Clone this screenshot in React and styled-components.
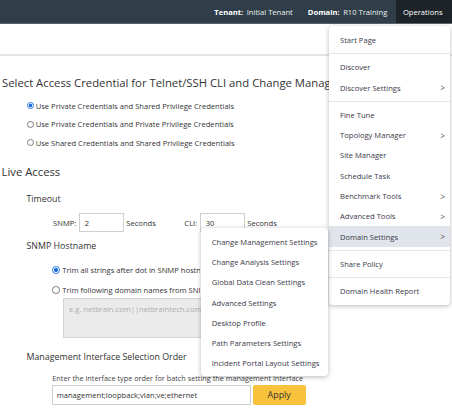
import React from 'react';
import styled, { createGlobalStyle } from 'styled-components';

const Global = createGlobalStyle`
  html, body { margin: 0; padding: 0; background: #fff; }
  body { font-family: "Open Sans", "Liberation Sans", sans-serif; color: #333; }
  * { box-sizing: border-box; }
`;

const Page = styled.div`
  position: relative;
  width: 452px;
  height: 408px;
  overflow: hidden;
  background: #fff;
`;

const TopBar = styled.header`
  height: 24px;
  background: #2f3e48;
  border-bottom: 1px solid #58646d;
  display: flex;
  justify-content: flex-end;
  align-items: stretch;
  font-size: 7.6px;
  color: #fff;
  white-space: nowrap;
`;

const Info = styled.div`
  display: flex;
  align-items: center;
  gap: 3.5px;
  margin-right: ${p => p.$gap}px;
`;

const InfoLabel = styled.span`
  font-weight: 700;
`;

const InfoValue = styled.span`
  color: #eef0f2;
`;

const OpsTab = styled.div`
  background: #1c2329;
  display: flex;
  align-items: center;
  padding: 0 9.5px 0 7.3px;
`;

const Toolbar = styled.div`
  height: 32px;
  border-bottom: 2px solid #e6e6e6;
`;

const Content = styled.main`
  white-space: nowrap;
`;

const Title = styled.h1`
  margin: ${p => p.$top}px 0 0 ${p => p.$left}px;
  font-size: 11.3px;
  line-height: 16px;
  font-weight: 400;
  color: #333;
  max-width: ${p => p.$clip || 440}px;
  overflow: hidden;
`;

const SubTitle = styled.h2`
  margin: ${p => p.$top}px 0 0 26.5px;
  font-size: 8.85px;
  line-height: 14px;
  font-weight: 400;
  color: #333;
`;

const RadioList = styled.div`
  margin: ${p => p.$top}px 0 0 ${p => p.$left}px;
  display: flex;
  flex-direction: column;
  gap: ${p => p.$gap}px;
`;

const RadioRow = styled.label`
  display: flex;
  align-items: center;
  gap: ${p => p.$gap}px;
  height: ${p => p.$h}px;
  font-size: ${p => p.$fs}px;
  color: #333;
  max-width: ${p => p.$clip || 400}px;
  overflow: hidden;
`;

const RadioDot = styled.span`
  width: ${p => p.$size}px;
  height: ${p => p.$size}px;
  border-radius: 50%;
  flex: none;
  border: 1px solid ${p => (p.$checked ? '#2a7ae2' : '#7d7d7d')};
  background: ${p =>
    p.$checked
      ? 'radial-gradient(circle, #1f6fe0 0 42%, #cfe0f8 52%, #fff 62%)'
      : '#fff'};
`;

const FieldRow = styled.div`
  margin: ${p => p.$top}px 0 0 53px;
  display: flex;
  align-items: center;
  height: 19px;
  font-size: 7.6px;
  color: #333;
`;

const Field = styled.div`
  display: flex;
  align-items: center;
  gap: 2.5px;
  margin-right: ${p => p.$after}px;
`;

const SmallInput = styled.div`
  width: 45px;
  height: 19px;
  border: 1px solid #cfcfcf;
  padding: 0 5px;
  display: flex;
  align-items: center;
  font-size: 7.6px;
  color: #333;
  background: #fff;
`;

const TextArea = styled.div`
  margin: 0 0 0 63px;
  width: 138px;
  height: 40px;
  background: #ebebeb;
  border: 1px solid #d4d4d4;
  border-right: none;
  padding: 4px 0 4px 5px;
  font-size: 7.6px;
  line-height: 12px;
  color: #ababab;
  overflow: hidden;
`;

const Hint = styled.p`
  margin: ${p => p.$top}px 0 0 52.3px;
  font-size: 7.3px;
  line-height: 12px;
  color: #444;
`;

const ApplyRow = styled.div`
  margin: 1.2px 0 0 51.7px;
  display: flex;
  gap: 2px;
  height: 19.5px;
`;

const WideInput = styled.div`
  width: 199px;
  height: 100%;
  border: 1px solid #cfcfcf;
  padding: 0 4px;
  display: flex;
  align-items: center;
  font-size: 7.6px;
  color: #333;
`;

const ApplyButton = styled.button`
  width: 53px;
  height: 100%;
  background: #f8c23c;
  border: none;
  border-radius: 2px;
  font-family: inherit;
  font-size: 8.9px;
  color: #333;
  padding: 0;
`;

const MenuPanel = styled.div`
  position: absolute;
  left: ${p => p.$left}px;
  top: ${p => p.$top}px;
  width: ${p => p.$width}px;
  background: #fff;
  border-radius: 4px;
  box-shadow: 0 1px 5px rgba(0, 0, 0, 0.28);
  padding: ${p => p.$padTop}px 0 ${p => p.$padBottom}px;
  z-index: ${p => p.$z};
`;

const MenuItem = styled.div`
  height: 20.3px;
  display: flex;
  align-items: center;
  justify-content: space-between;
  padding: 0 5px 0 ${p => p.$indent}px;
  font-size: 7.6px;
  color: #3a3848;
  background: ${p => (p.$active ? '#dfe5ea' : 'transparent')};
  white-space: nowrap;
`;

const Chevron = styled.span`
  font-size: 8.4px;
  color: #555;
`;

const MenuSep = styled.div`
  height: 1px;
  background: #e4e4e4;
  margin: 3px 0;
`;

const opsMenu = [
  ['Start Page'],
  '-',
  ['Discover'],
  ['Discover Settings', true],
  '-',
  ['Fine Tune'],
  ['Topology Manager', true],
  ['Site Manager'],
  ['Schedule Task'],
  ['Benchmark Tools', true],
  ['Advanced Tools', true],
  ['Domain Settings', true, true],
  '-',
  ['Share Policy'],
  '-',
  ['Domain Health Report'],
];

const subMenu = [
  'Change Management Settings',
  'Change Analysis Settings',
  'Global Data Clean Settings',
  'Advanced Settings',
  'Desktop Profile',
  'Path Parameters Settings',
  'Incident Portal Layout Settings',
];

export default function App() {
  return (
    <Page>
      <Global />
      <TopBar>
        <Info $gap={15}>
          <InfoLabel>Tenant:</InfoLabel>
          <InfoValue>Initial Tenant</InfoValue>
        </Info>
        <Info $gap={8.3}>
          <InfoLabel>Domain:</InfoLabel>
          <InfoValue>R10 Training</InfoValue>
        </Info>
        <OpsTab>Operations</OpsTab>
      </TopBar>
      <Toolbar />
      <Content>
        <Title $top={19} $left={2} $clip={327}>
          Select Access Credential for Telnet/SSH CLI and Change Management
        </Title>
        <RadioList $top={5.6} $left={26.7} $gap={0}>
          <RadioRow $gap={2} $h={18.4} $fs={7.6}>
            <RadioDot $size={7} $checked />
            Use Private Credentials and Shared Privilege Credentials
          </RadioRow>
          <RadioRow $gap={2} $h={18.4} $fs={7.6}>
            <RadioDot $size={7} />
            Use Private Credentials and Private Privilege Credentials
          </RadioRow>
          <RadioRow $gap={2} $h={18.4} $fs={7.6}>
            <RadioDot $size={7} />
            Use Shared Credentials and Shared Privilege Credentials
          </RadioRow>
        </RadioList>
        <Title $top={11.9} $left={1.5}>Live Access</Title>
        <SubTitle $top={12.6}>Timeout</SubTitle>
        <FieldRow $top={7.2}>
          <Field $after={28.5}>
            SNMP:
            <SmallInput>2</SmallInput>
            Seconds
          </Field>
          <Field $after={0}>
            CLI:
            <SmallInput>30</SmallInput>
            Seconds
          </Field>
        </FieldRow>
        <SubTitle $top={6.6}>SNMP Hostname</SubTitle>
        <RadioList $top={9} $left={52.3} $gap={4.2}>
          <RadioRow $gap={2.3} $h={16} $fs={7.6} $clip={148}>
            <RadioDot $size={7.7} $checked />
            Trim all strings after dot in SNMP hostname
          </RadioRow>
          <RadioRow $gap={2.3} $h={16} $fs={7.6} $clip={148}>
            <RadioDot $size={7.7} />
            Trim following domain names from SNMP hostname
          </RadioRow>
        </RadioList>
        <TextArea>e.g. netbrain.com||netbraintech.com</TextArea>
        <SubTitle $top={11.3}>Management Interface Selection Order</SubTitle>
        <Hint $top={8.3}>
          Enter the interface type order for batch setting the management interface
        </Hint>
        <ApplyRow>
          <WideInput>management;loopback;vlan;ve;ethernet</WideInput>
          <ApplyButton>Apply</ApplyButton>
        </ApplyRow>
      </Content>

      <MenuPanel $left={329} $top={25.5} $width={121} $padTop={4.3} $padBottom={4} $z={2}>
        {opsMenu.map((it, i) =>
          it === '-' ? (
            <MenuSep key={i} />
          ) : (
            <MenuItem key={i} $indent={11} $active={!!it[2]}>
              {it[0]}
              {it[1] && <Chevron>&gt;</Chevron>}
            </MenuItem>
          )
        )}
      </MenuPanel>

      <MenuPanel $left={201} $top={228} $width={127} $padTop={3.5} $padBottom={2} $z={3}>
        {subMenu.map(t => (
          <MenuItem key={t} $indent={10.7}>
            {t}
          </MenuItem>
        ))}
      </MenuPanel>
    </Page>
  );
}
